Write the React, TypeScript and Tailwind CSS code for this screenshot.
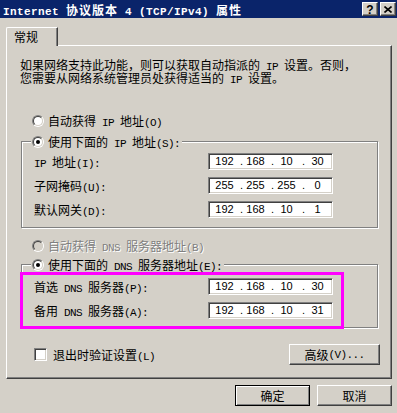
import React from "react";

const CJK = "font-['Noto_Sans_CJK_SC',sans-serif]";

// SimSun-like metrics: CJK glyphs 12px wide, latin half-width 6px
function Txt({
  s,
  latin = "text-[11px] tracking-[-0.6px]",
  cjk = "",
}: {
  s: string;
  latin?: string;
  cjk?: string;
}) {
  const parts = s.split(/([\x20-\x7e]+)/).filter((p) => p !== "");
  return (
    <>
      {parts.map((p, i) =>
        /^[\x20-\x7e]+$/.test(p) ? (
          <span key={i} className={`font-['Liberation_Mono',monospace] whitespace-pre leading-[0] ${latin}`}>
            {p}
          </span>
        ) : (
          <span key={i} className={cjk}>
            {p}
          </span>
        )
      )}
    </>
  );
}

function Radio({ on, disabled }: { on?: boolean; disabled?: boolean }) {
  return (
    <span className="w-[12px] h-[12px] rounded-full border border-t-[#808080] border-l-[#808080] border-r-white border-b-white flex shrink-0">
      <span
        className={`flex-1 rounded-full border border-t-[#404040] border-l-[#404040] border-r-[#d4d0c8] border-b-[#d4d0c8] flex items-center justify-center ${
          disabled ? "bg-[#d4d0c8]" : "bg-white"
        }`}
      >
        {on && <span className="w-[4px] h-[4px] rounded-full bg-black" />}
      </span>
    </span>
  );
}

function RadioRow({ label, on, disabled }: { label: string; on?: boolean; disabled?: boolean }) {
  return (
    <span className="flex items-center gap-[4px] h-[13px]">
      <Radio on={on} disabled={disabled} />
      <span className={`whitespace-nowrap ${disabled ? "text-[#808080] [text-shadow:1px_1px_0_#fff]" : ""}`}>
        <Txt s={label} />
      </span>
    </span>
  );
}

function IpBox({ v }: { v: string[] }) {
  return (
    <div className="w-[125px] h-[17px] bg-white border border-t-[#808080] border-l-[#808080] border-r-white border-b-white shadow-[inset_1px_1px_0_#404040,inset_-1px_-1px_0_#d4d0c8] flex items-center pl-[3px] font-['Liberation_Sans',sans-serif] text-[11px] leading-none">
      {v.map((n, i) => (
        <React.Fragment key={i}>
          <span className="w-[25px] text-center">{n}</span>
          {i < 3 && <span className="w-[6px] text-right">.</span>}
        </React.Fragment>
      ))}
    </div>
  );
}

function Field({ label, v }: { label: string; v: string[] }) {
  return (
    <div className="flex items-center h-[17px]">
      <span className="w-[174px]">
        <Txt s={label} />
      </span>
      <IpBox v={v} />
    </div>
  );
}

function GroupBox({
  legend,
  children,
  className = "",
}: {
  legend: React.ReactNode;
  children: React.ReactNode;
  className?: string;
}) {
  return (
    <fieldset
      className={`ml-[14px] w-[357px] border border-[#808080] shadow-[inset_1px_1px_0_#fff,1px_1px_0_#fff] ${className}`}
    >
      <legend className="ml-[9px] pl-[1px] pr-[2px] h-[13px] bg-[#d4d0c8] leading-[13px]">{legend}</legend>
      {children}
    </fieldset>
  );
}

function Button({ children, def, className = "" }: { children: React.ReactNode; def?: boolean; className?: string }) {
  return (
    <button
      className={`h-[21px] bg-[#d4d0c8] border flex items-center justify-center ${
        def
          ? "border-black shadow-[inset_1px_1px_0_#fff,inset_-1px_-1px_0_#808080]"
          : "border-t-white border-l-white border-r-[#404040] border-b-[#404040] shadow-[inset_-1px_-1px_0_#808080]"
      } ${className}`}
    >
      {children}
    </button>
  );
}

function TitleBtn({ children }: { children: React.ReactNode }) {
  return (
    <span className="w-[16px] h-[14px] bg-[#d4d0c8] border border-t-white border-l-white border-r-[#404040] border-b-[#404040] shadow-[inset_-1px_-1px_0_#808080] flex items-center justify-center">
      {children}
    </span>
  );
}

export default function App() {
  return (
    <div className={`w-[397px] h-[413px] bg-[#d4d0c8] text-[12px] leading-[13px] text-black overflow-hidden ${CJK}`}>
      {/* title bar */}
      <div className="h-[18px] bg-[#0a246a] flex items-center pl-[3px] pr-[1px]">
        <span className="text-white font-bold">
          <Txt s="Internet 协议版本 4 (TCP/IPv4) 属性" latin="text-[11px] tracking-[0.4px]" cjk="tracking-[1px]" />
        </span>
        <div className="ml-auto flex gap-[2px]">
          <TitleBtn>
            <span className="font-['Liberation_Sans',sans-serif] font-bold text-[12px] leading-none mt-[1px]">?</span>
          </TitleBtn>
          <TitleBtn>
            <svg width="8" height="7" viewBox="0 0 8 7">
              <path d="M0.5 0.5L7.5 6.5M7.5 0.5L0.5 6.5" stroke="#000" strokeWidth="1.6" />
            </svg>
          </TitleBtn>
        </div>
      </div>

      <div className="pl-[6px] pt-[9px]">
        {/* tab */}
        <div className="relative z-10 w-[52px] h-[19px] -mb-[1px] bg-[#d4d0c8] border-t border-l border-white border-r border-r-[#404040] shadow-[inset_-1px_0_0_#808080] rounded-tl-[2px] pl-[7px] pt-[2px]">
          常规
        </div>

        {/* tab panel */}
        <div className="relative w-[386px] h-[334px] border border-t-white border-l-white border-r-[#404040] border-b-[#404040] shadow-[inset_-1px_-1px_0_#808080] flex flex-col">
          <p className="ml-[13px] mt-[12px] h-[26px]">
            <Txt s="如果网络支持此功能，则可以获取自动指派的 IP 设置。否则，" />
            <br />
            <Txt s="您需要从网络系统管理员处获得适当的 IP 设置。" />
          </p>

          <div className="ml-[25px] mt-[30px] h-[13px] flex">
            <RadioRow label="自动获得 IP 地址(O)" />
          </div>

          <GroupBox className="mt-[8px]" legend={<RadioRow label="使用下面的 IP 地址(S):" on />}>
            <div className="pt-[5px] pb-[9px] pl-[12px] flex flex-col gap-[7px]">
              <Field label="IP 地址(I):" v={["192", "168", "10", "30"]} />
              <Field label="子网掩码(U):" v={["255", "255", "255", "0"]} />
              <Field label="默认网关(D):" v={["192", "168", "10", "1"]} />
            </div>
          </GroupBox>

          <div className="ml-[25px] mt-[11px] h-[13px] flex">
            <RadioRow label="自动获得 DNS 服务器地址(B)" disabled />
          </div>

          <GroupBox className="mt-[6px]" legend={<RadioRow label="使用下面的 DNS 服务器地址(E):" on />}>
            <div className="pt-[7px] pb-[8px] pl-[12px] flex flex-col gap-[7px]">
              <Field label="首选 DNS 服务器(P):" v={["192", "168", "10", "30"]} />
              <Field label="备用 DNS 服务器(A):" v={["192", "168", "10", "31"]} />
            </div>
          </GroupBox>

          <div className="mt-[16px] flex items-center">
            <span className="ml-[27px] w-[13px] h-[13px] bg-white border border-t-[#808080] border-l-[#808080] border-r-white border-b-white shadow-[inset_1px_1px_0_#404040,inset_-1px_-1px_0_#d4d0c8]" />
            <span className="ml-[6px]">
              <Txt s="退出时验证设置(L)" />
            </span>
            <Button className="ml-auto mr-[11px] w-[91px]">
              <Txt s="高级(V)..." />
            </Button>
          </div>

          {/* highlight annotation */}
          <div className="absolute left-[13px] top-[226px] w-[324px] h-[57px] border-[3px] border-[#ff00ff] pointer-events-none" />
        </div>

        <div className="w-[386px] mt-[6px] flex justify-end gap-[7px]">
          <Button def className="w-[75px]">
            确定
          </Button>
          <Button className="w-[75px]">取消</Button>
        </div>
      </div>
    </div>
  );
}
